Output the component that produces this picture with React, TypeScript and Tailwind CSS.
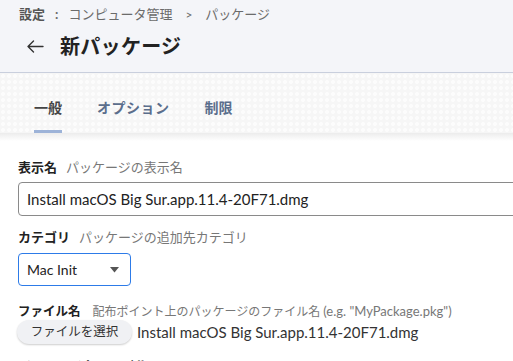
import React from "react";

const font = { fontFamily: 'Lato, "Noto Sans CJK JP", sans-serif' };

export default function App() {
  return (
    <div className="w-[513px] h-[361px] overflow-hidden bg-white" style={font}>
      <div className="h-[73px] bg-[#f4f5f9] border-b border-[#c9cfdd] pl-[19px] pt-[5px]">
        <div className="flex items-center h-[20px] text-[13px] text-[#6b6b6b]">
          <span className="font-bold text-[#555]">設定</span>
          <span className="ml-[10px] mr-[10px] font-bold">:</span>
          <span>コンピュータ管理</span>
          <span className="ml-[13px] mr-[13px] text-[12px]">&gt;</span>
          <span>パッケージ</span>
        </div>
        <div className="flex items-center h-[30px] mt-[6px] ml-[8px]">
          <svg width="17" height="13" viewBox="0 0 17 13" className="mr-[16px]">
            <path d="M1 6.5h15M1 6.5l5.5-5.5M1 6.5l5.5 5.5" stroke="#333" strokeWidth="1.4" fill="none" strokeLinecap="round" />
          </svg>
          <span className="text-[20px] font-bold text-[#222] tracking-[0.3px]">新パッケージ</span>
        </div>
      </div>
      <div className="relative h-[60px] bg-[#f6f6f6] bg-[radial-gradient(circle,#fcfcfc_1.8px,transparent_2.2px)] bg-[length:6px_6px] flex items-end pl-[34px] gap-[35px] text-[14px] font-bold text-[#5b6e8c]">
        <div className="flex flex-col items-center">
          <span className="text-[#444] leading-[20px] mb-[12px]">一般</span>
          <div className="h-[3px] w-[28px] bg-[#9db3d8]" />
        </div>
        <div className="flex flex-col items-center">
          <span className="leading-[20px] mb-[15px] tracking-[0.5px]">オプション</span>
        </div>
        <div className="flex flex-col items-center">
          <span className="leading-[20px] mb-[15px]">制限</span>
        </div>
      </div>
      <div className="h-[8px] bg-gradient-to-b from-[#ececec] to-white" />
      <div className="pl-[18px] pt-[17px]">
        <div className="flex items-baseline text-[13px] h-[18px]">
          <span className="font-bold text-[#222]">表示名</span>
          <span className="ml-[9px] text-[#777]">パッケージの表示名</span>
        </div>
        <div className="mt-[6px] h-[34px] w-[520px] border border-[#8a8a8a] rounded-[4px] flex items-center pl-[8px] text-[15px] text-[#222]">
          Install macOS Big Sur.app.11.4-20F71.dmg
        </div>
        <div className="mt-[12px] flex items-baseline text-[13px] h-[18px]">
          <span className="font-bold text-[#222]">カテゴリ</span>
          <span className="ml-[9px] text-[#777]">パッケージの追加先カテゴリ</span>
        </div>
        <div className="mt-[7px] h-[33px] w-[113px] border-[1.5px] border-[#2d7be8] rounded-[4px] flex items-center justify-between pl-[8px] pr-[11px] text-[14px] text-[#222]">
          <span>Mac Init</span>
          <svg width="9" height="6" viewBox="0 0 9 6">
            <path d="M0 0h9L4.5 5.5z" fill="#555" />
          </svg>
        </div>
        <div className="mt-[16px] flex items-baseline text-[13px] h-[18px]">
          <span className="font-bold text-[#222] text-[12.5px]">ファイル名</span>
          <span className="ml-[12px] text-[12px] text-[#777]">配布ポイント上のパッケージのファイル名</span>
          <span className="ml-[3px] text-[13px] text-[#777]">(e.g. "MyPackage.pkg")</span>
        </div>
        <div className="flex items-center -ml-[1px] mt-[0px]">
          <div className="h-[24px] w-[115px] rounded-full bg-[#f0f1f4] shadow-[0_1px_2px_rgba(0,0,0,0.2)] flex items-center justify-center text-[12.5px] text-[#333]">
            ファイルを選択
          </div>
          <span className="ml-[5px] text-[15px] text-[#333]">Install macOS Big Sur.app.11.4-20F71.dmg</span>
        </div>
        <div className="mt-[12px] text-[13px] font-bold text-[#222]">マニフェストファイル</div>
      </div>
    </div>
  );
}
